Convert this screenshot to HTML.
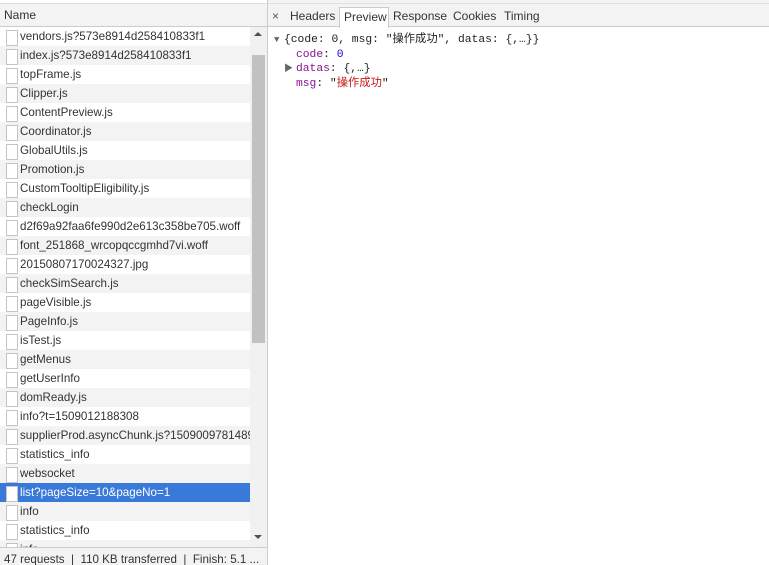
<!DOCTYPE html>
<html><head><meta charset="utf-8"><style>
*{margin:0;padding:0;box-sizing:border-box}
body{width:769px;height:565px;overflow:hidden;background:#fff;font-family:"Liberation Sans","Noto Sans CJK SC",sans-serif;font-size:12px;color:#222;position:relative}
#left{position:absolute;left:0;top:0;width:268px;height:565px;border-right:1px solid #ccc;background:#fff}
#hdr{position:absolute;left:0;top:3px;width:267px;height:24px;background:#f3f3f3;border-bottom:1px solid #ccc;border-top:1px solid #e0e0e0;padding:4px 4px;color:#333}
.row{position:absolute;left:0;width:250px;height:19px;line-height:19px;padding-left:20px;white-space:nowrap;overflow:hidden;font-size:11.6px;color:#333}
.row.g{background:#f3f3f3}
.row::before{content:"";position:absolute;left:6px;top:3px;width:10px;height:14px;border:1px solid #c4c4c4;background:#fff}
.row.sel{background:#3879d9;color:#fff}
#sb{position:absolute;left:250px;top:27px;width:17px;height:520px;background:#f1f1f1}
#thumb{position:absolute;left:252px;top:55px;width:13px;height:288px;background:#c1c1c1}
#status{position:absolute;left:0;top:547px;width:267px;height:18px;background:#f3f3f3;border-top:1px solid #ccc;color:#333;padding:5px 4px 0;white-space:nowrap;overflow:hidden;font-size:11.6px}
#tabs{position:absolute;left:268px;top:3px;width:501px;height:24px;background:#f3f3f3;border-bottom:1px solid #ccc;border-top:1px solid #e0e0e0}
.tab{position:absolute;top:3px;height:21px;line-height:19px;color:#333}
#pre{position:absolute;left:274px;top:33px;font-family:"Liberation Mono","Noto Sans CJK SC",monospace;font-size:11.3px;line-height:14.5px;color:#222}
.k{color:#881391}.n{color:#1c00cf}.s{color:#c41a16}
</style></head><body>
<div style="position:absolute;left:0;top:0;width:769px;height:3px;background:#f3f3f3"></div>
<div id="left">
<div id="hdr">Name</div>
<div id="rows"></div>
<div id="sb"></div><div id="thumb"></div>
<div style="position:absolute;left:254px;top:32px;border:4px solid transparent;border-bottom:4px solid #505050;border-top:0;width:0"></div>
<div style="position:absolute;left:254px;top:535px;border:4px solid transparent;border-top:4px solid #505050;border-bottom:0;width:0"></div>
<div id="status">47 requests &nbsp;|&nbsp; 110 KB transferred &nbsp;|&nbsp; Finish: 5.1 ...</div>
</div>
<div id="tabs">
<div class="tab" style="left:4px;color:#555">×</div>
<div class="tab" style="left:22px">Headers</div>
<div class="tab" style="left:71px;width:50px;background:#fff;border:1px solid #ccc;border-bottom:none;padding-left:4px">Preview</div>
<div class="tab" style="left:125px">Response</div>
<div class="tab" style="left:185px">Cookies</div>
<div class="tab" style="left:236px">Timing</div>
</div>
<div id="pre">
<div><span style="color:#666;font-size:9px;display:inline-block;width:10px">▼</span>{code: 0, msg: "操作成功", datas: {,…}}</div>
<div style="padding-left:22px"><span class="k">code</span>: <span class="n">0</span></div>
<div style="padding-left:11px;position:relative"><span style="color:#666;font-size:9px;position:absolute;left:10px;top:0">▶</span><span style="padding-left:11px"></span><span class="k">datas</span>: {,…}</div>
<div style="padding-left:22px"><span class="k">msg</span>: "<span class="s">操作成功</span>"</div>
</div>
<script>
var n=["vendors.js?573e8914d258410833f1","index.js?573e8914d258410833f1","topFrame.js","Clipper.js","ContentPreview.js","Coordinator.js","GlobalUtils.js","Promotion.js","CustomTooltipEligibility.js","checkLogin","d2f69a92faa6fe990d2e613c358be705.woff","font_251868_wrcopqccgmhd7vi.woff","20150807170024327.jpg","checkSimSearch.js","pageVisible.js","PageInfo.js","isTest.js","getMenus","getUserInfo","domReady.js","info?t=1509012188308","supplierProd.asyncChunk.js?1509009781489","statistics_info","websocket","list?pageSize=10&pageNo=1","info","statistics_info","info"];
var h="";for(var i=0;i<n.length;i++){var c=i==24?"sel":(i%2?"g":"");h+='<div class="row '+c+'" style="top:'+(27+19*i)+'px;'+(i==27?'height:20px':'')+'">'+n[i].replace(/&/g,"&amp;")+'</div>';}
document.getElementById("rows").innerHTML=h;
</script>
</body></html>
